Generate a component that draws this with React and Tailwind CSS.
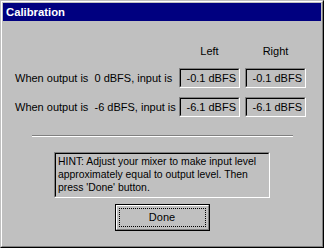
export default function App() {
  const sunkenInner =
    "h-full w-full border border-t-black border-l-black border-r-[#c0c0c0] border-b-[#c0c0c0]";
  const Box = ({ v }) => (
    <div className="w-[61px] h-[20px] border border-t-[#808080] border-l-[#808080] border-r-white border-b-white">
      <div className={sunkenInner + " flex items-center justify-end pr-[2px]"}>
        <span>{v}</span>
      </div>
    </div>
  );
  return (
    <div className="w-[324px] h-[248px] bg-[#c0c0c0] font-['Liberation_Sans',Arial,sans-serif] text-[11px] leading-[13px] text-black border border-t-[#c0c0c0] border-l-[#c0c0c0] border-r-black border-b-black">
      <div className="h-full border border-t-white border-l-white border-r-[#808080] border-b-[#808080] p-px flex flex-col">
        <div className="h-[18px] bg-[#000080] flex items-center pl-[3px]">
          <span className="text-white font-bold text-[11.3px]">Calibration</span>
        </div>
        <div className="flex-1 flex flex-col pl-[12px]">
          <div className="mt-[24px] flex h-[13px]">
            <div className="w-[164px]" />
            <div className="w-[61px] text-center">Left</div>
            <div className="w-[5px]" />
            <div className="w-[61px] text-center">Right</div>
          </div>
          <div className="mt-[10px] flex items-center h-[20px]">
            <div className="w-[164px] whitespace-pre">When output is  0 dBFS, input is</div>
            <Box v="-0.1 dBFS" />
            <div className="w-[5px]" />
            <Box v="-0.1 dBFS" />
          </div>
          <div className="mt-[9px] flex items-center h-[20px]">
            <div className="w-[164px] whitespace-pre">When output is  -6 dBFS, input is</div>
            <Box v="-6.1 dBFS" />
            <div className="w-[5px]" />
            <Box v="-6.1 dBFS" />
          </div>
          <div className="mt-[18px] ml-[17px] w-[261px] h-[2px] border-t border-t-[#808080] border-b border-b-white" />
          <div className="mt-[15px] ml-[39px] w-[216px] h-[46px] border border-t-[#808080] border-l-[#808080] border-r-white border-b-white">
            <div className={sunkenInner + " pl-[2px] pt-[1px] text-[10.4px] leading-[13px]"}>
              HINT: Adjust your mixer to make input level
              <br />
              approximately equal to output level. Then
              <br />
              press 'Done' button.
            </div>
          </div>
          <div className="mt-[6px] flex justify-center pr-[12px]">
            <div className="w-[95px] h-[27px] border border-black">
              <div className="h-full w-full border border-t-white border-l-white border-r-[#808080] border-b-[#808080] p-[2px]">
                <div className="h-full w-full border border-dotted border-black flex items-center justify-center">
                  Done
                </div>
              </div>
            </div>
          </div>
        </div>
      </div>
    </div>
  );
}
